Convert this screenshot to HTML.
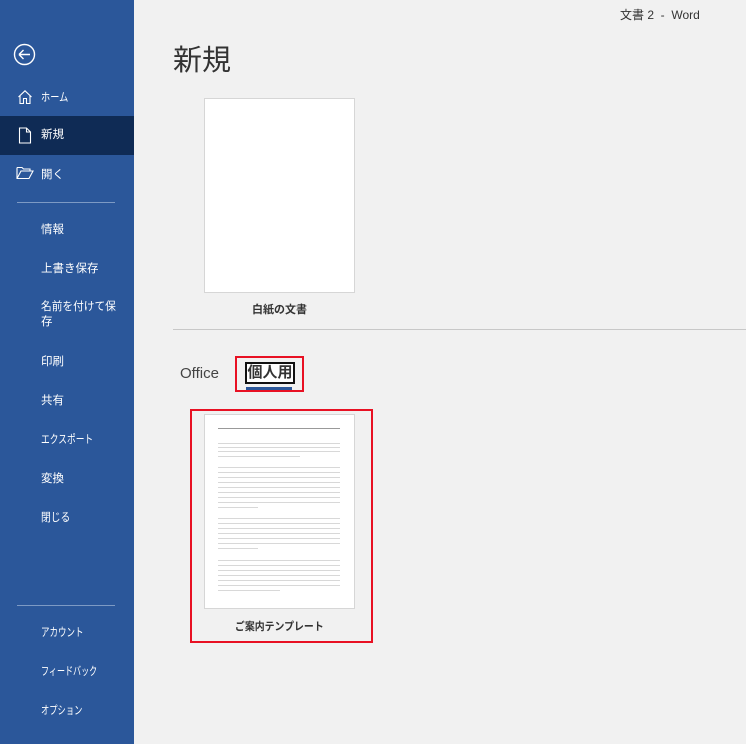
<!DOCTYPE html>
<html><head><meta charset="utf-8"><style>
*{margin:0;padding:0;box-sizing:border-box}
body{width:746px;height:744px;background:#f1f1f1;font-family:"Liberation Sans","Noto Sans CJK JP",sans-serif;position:relative;overflow:hidden}
.side{position:absolute;left:0;top:0;width:134px;height:744px;background:#2b579a;color:#fff}
.it{position:absolute;left:0;width:134px;font-size:11.5px;padding-left:41px;line-height:16px}
.it span{display:inline-block;transform-origin:left center;white-space:nowrap}
.sel{background:#0f2b55;height:39px;top:116px;line-height:39px}
.sep{position:absolute;left:17px;width:98px;height:1px;background:#7d9ac4}
.t{position:absolute}
.ln{position:absolute;height:1px;background:#d8d8d8}
</style></head><body>
<div class="side">
<svg class="t" style="left:13px;top:43px" width="23" height="23" viewBox="0 0 23 23"><circle cx="11.5" cy="11.5" r="10" fill="none" stroke="#fff" stroke-width="1.4"/><path d="M6 11.5h11M6 11.5l4.5-4.5M6 11.5l4.5 4.5" stroke="#fff" stroke-width="1.4" fill="none"/></svg>
<svg class="t" style="left:17px;top:89px" width="16" height="16" viewBox="0 0 16 16"><path d="M1.5 8L8 1.8 14.5 8M3 6.5v8h3.5v-5h3v5H13v-8" stroke="#fff" stroke-width="1.1" fill="none"/></svg>
<div class="it" style="top:90px"><span style="transform:scaleX(0.8)">ホーム</span></div>
<div class="it sel">新規</div>
<svg class="t" style="left:18px;top:127px" width="14" height="17" viewBox="0 0 14 17"><path d="M1.5 1h7l4 4v11h-11zM8.5 1v4h4" stroke="#fff" stroke-width="1.1" fill="none"/></svg>
<svg class="t" style="left:16px;top:166px" width="18" height="14" viewBox="0 0 18 14"><path d="M1 1.5h5l1.5 1.5H14v2M1 1.5v11h12l4-7.5H5L1 12.5" stroke="#fff" stroke-width="1.1" fill="none"/></svg>
<div class="it" style="top:167px">開く</div>
<div class="sep" style="top:202px"></div>
<div class="it" style="top:222px">情報</div>
<div class="it" style="top:261px">上書き保存</div>
<div class="it" style="top:300px;line-height:15px"><span style="transform:scaleX(0.93)">名前を付けて保</span><br>存</div>
<div class="it" style="top:354px">印刷</div>
<div class="it" style="top:393px">共有</div>
<div class="it" style="top:432px"><span style="transform:scaleX(0.76)">エクスポート</span></div>
<div class="it" style="top:471px">変換</div>
<div class="it" style="top:510px"><span style="transform:scaleX(0.85)">閉じる</span></div>
<div class="sep" style="top:605px"></div>
<div class="it" style="top:625px"><span style="transform:scaleX(0.74)">アカウント</span></div>
<div class="it" style="top:664px"><span style="transform:scaleX(0.7)">フィードバック</span></div>
<div class="it" style="top:703px"><span style="transform:scaleX(0.72)">オプション</span></div>
</div>
<div class="t" style="left:620px;top:6px;font-size:12px;color:#333">文書 2 &nbsp;- &nbsp;Word</div>
<div class="t" style="left:173px;top:37px;font-size:29px;color:#333">新規</div>
<div class="t" style="left:204px;top:98px;width:151px;height:195px;background:#fff;border:1px solid #d6d6d6"></div>
<div class="t" style="left:204px;top:301px;width:151px;text-align:center;font-size:11px;font-weight:bold;color:#333">白紙の文書</div>
<div class="t" style="left:173px;top:329px;width:573px;height:1px;background:#c8c8c8"></div>
<div class="t" style="left:180px;top:365px;font-size:15px;color:#444">Office</div>
<div class="t" style="left:235px;top:356px;width:69px;height:36px;border:2px solid #e81123"></div>
<div class="t" style="left:245px;top:362px;width:50px;height:22px;border:2px solid #111;background:#fff;font-size:15px;font-weight:bold;color:#333;text-align:center;line-height:18px">個人用</div>
<div class="t" style="left:246px;top:387px;width:46px;height:3px;background:#2b579a"></div>
<div class="t" style="left:190px;top:409px;width:183px;height:234px;border:2px solid #e81123"></div>
<div class="t" style="left:204px;top:414px;width:151px;height:195px;background:#fff;border:1px solid #d6d6d6"></div>
<div class="ln" style="left:218px;top:428px;width:122px;background:#999"></div>
<div class="ln" style="left:218px;top:443px;width:122px"></div>
<div class="ln" style="left:218px;top:447px;width:122px"></div>
<div class="ln" style="left:218px;top:451px;width:122px"></div>
<div class="ln" style="left:218px;top:456px;width:82px"></div>
<div class="ln" style="left:218px;top:467px;width:122px"></div>
<div class="ln" style="left:218px;top:472px;width:122px"></div>
<div class="ln" style="left:218px;top:477px;width:122px"></div>
<div class="ln" style="left:218px;top:482px;width:122px"></div>
<div class="ln" style="left:218px;top:487px;width:122px"></div>
<div class="ln" style="left:218px;top:492px;width:122px"></div>
<div class="ln" style="left:218px;top:497px;width:122px"></div>
<div class="ln" style="left:218px;top:502px;width:122px"></div>
<div class="ln" style="left:218px;top:507px;width:40px"></div>
<div class="ln" style="left:218px;top:518px;width:122px"></div>
<div class="ln" style="left:218px;top:523px;width:122px"></div>
<div class="ln" style="left:218px;top:528px;width:122px"></div>
<div class="ln" style="left:218px;top:533px;width:122px"></div>
<div class="ln" style="left:218px;top:538px;width:122px"></div>
<div class="ln" style="left:218px;top:543px;width:122px"></div>
<div class="ln" style="left:218px;top:548px;width:40px"></div>
<div class="ln" style="left:218px;top:560px;width:122px"></div>
<div class="ln" style="left:218px;top:565px;width:122px"></div>
<div class="ln" style="left:218px;top:570px;width:122px"></div>
<div class="ln" style="left:218px;top:575px;width:122px"></div>
<div class="ln" style="left:218px;top:580px;width:122px"></div>
<div class="ln" style="left:218px;top:585px;width:122px"></div>
<div class="ln" style="left:218px;top:590px;width:62px"></div>
<div class="t" style="left:204px;top:618px;width:151px;text-align:center;font-size:11px;font-weight:bold;color:#333"><span style="display:inline-block;transform:scaleX(0.9)">ご案内テンプレート</span></div>
</body></html>
